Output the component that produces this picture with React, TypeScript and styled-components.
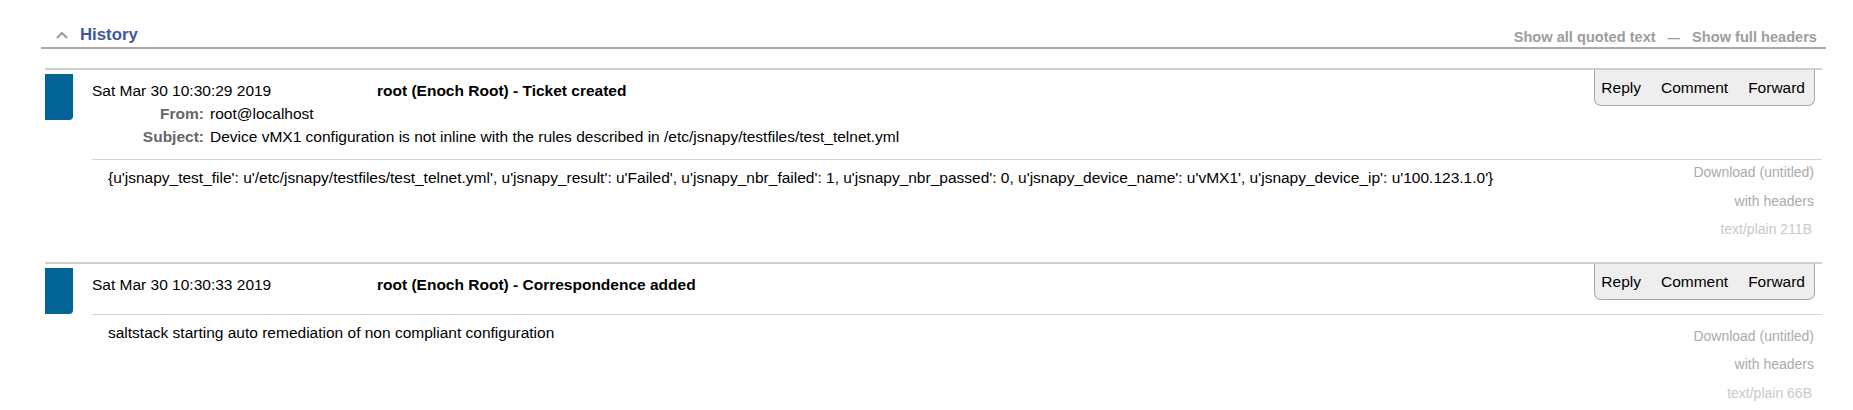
import React from "react";
import styled, { createGlobalStyle } from "styled-components";

const GlobalStyle = createGlobalStyle`
  html, body { margin: 0; padding: 0; background: #fff; }
  body {
    font-family: "Liberation Sans", Arial, Helvetica, sans-serif;
    color: #000;
  }
`;

const Page = styled.div`
  padding: 0 27px 0 41px;
`;

const TitleBar = styled.div`
  display: flex;
  justify-content: space-between;
  align-items: flex-end;
  height: 47px;
  border-bottom: 2px solid #a9a9a9;
`;

const TitleLeft = styled.div`
  align-self: flex-start;
  display: flex;
  align-items: center;
  padding: 25px 0 0 15px;
`;

const Chevron = styled.svg`
  display: block;
  width: 12px;
  height: 8px;
  margin-right: 12px;
`;

const TitleText = styled.span`
  font-size: 16.8px;
  line-height: 20px;
  font-weight: bold;
  color: #42579a;
`;

const TitleLinks = styled.div`
  display: flex;
  align-items: baseline;
  padding-right: 9px;
  font-size: 14.6px;
  line-height: 18px;
  font-weight: bold;
  color: #9d9d9d;
`;

const Dash = styled.span`
  font-size: 12.5px;
  margin: 0 12px;
`;

const MessageList = styled.div`
  margin-top: 19px;
`;

const Message = styled.div<{ $gap: number }>`
  display: flex;
  margin: 0 4px ${(p) => p.$gap}px;
  border-top: 2px solid #cfcfcf;
`;

const Stripe = styled.div`
  flex: none;
  width: 28px;
  height: 46px;
  margin-top: 4px;
  background: #026497;
  border-bottom-right-radius: 4px;
`;

const Content = styled.div`
  flex: 1;
  min-width: 0;
  margin-left: 19px;
`;

const Header = styled.div`
  display: flex;
  justify-content: space-between;
  align-items: flex-start;
  min-height: 50px;
  padding-right: 7px;
  border-bottom: 1px solid #d4d4d4;
`;

const Meta = styled.div`
  padding: 9.4px 0 10.6px;
  font-size: 15.5px;
  line-height: 23px;
`;

const MetaRow = styled.div`
  display: flex;
`;

const DateCell = styled.div`
  flex: none;
  width: 285px;
`;

const Summary = styled.div`
  font-weight: bold;
`;

const Label = styled.div`
  flex: none;
  width: 112px;
  text-align: right;
  font-weight: bold;
  color: #666;
`;

const Value = styled.div`
  margin-left: 6px;
`;

const Actions = styled.div`
  display: flex;
  gap: 20px;
  padding: 6px 9px 6px 6px;
  background: #eeeeee;
  border: 1px solid #a6a6a6;
  border-top: none;
  border-radius: 0 0 7px 7px;
  font-size: 15.5px;
  line-height: 23px;
`;

const ActionLink = styled.span`
  color: #000;
`;

const Body = styled.div`
  display: flex;
  justify-content: space-between;
  align-items: flex-start;
  padding-right: 8px;
`;

const BodyText = styled.div`
  padding: 6px 0 0 16px;
  font-size: 15.5px;
  line-height: 23px;
`;

const Attachments = styled.div<{ $top: number }>`
  display: flex;
  flex-direction: column;
  align-items: flex-end;
  padding-top: ${(p) => p.$top}px;
  font-size: 14px;
  line-height: 18px;
`;

const AttachLine = styled.div<{ $faint?: boolean }>`
  margin-bottom: 10.5px;
  padding-right: ${(p) => (p.$faint ? 2 : 0)}px;
  color: ${(p) => (p.$faint ? "#c9c9c9" : "#ababab")};
`;

type Msg = {
  date: string;
  summary: string;
  from?: string;
  subject?: string;
  body: string;
  size: string;
  attachTop: number;
  gap: number;
};

const messages: Msg[] = [
  {
    date: "Sat Mar 30 10:30:29 2019",
    summary: "root (Enoch Root) - Ticket created",
    from: "root@localhost",
    subject:
      "Device vMX1 configuration is not inline with the rules described in /etc/jsnapy/testfiles/test_telnet.yml",
    body:
      "{u'jsnapy_test_file': u'/etc/jsnapy/testfiles/test_telnet.yml', u'jsnapy_result': u'Failed', u'jsnapy_nbr_failed': 1, u'jsnapy_nbr_passed': 0, u'jsnapy_device_name': u'vMX1', u'jsnapy_device_ip': u'100.123.1.0'}",
    size: "text/plain 211B",
    attachTop: 3.5,
    gap: 13,
  },
  {
    date: "Sat Mar 30 10:30:33 2019",
    summary: "root (Enoch Root) - Correspondence added",
    body: "saltstack starting auto remediation of non compliant configuration",
    size: "text/plain 66B",
    attachTop: 12,
    gap: 0,
  },
];

export default function App() {
  return (
    <>
      <GlobalStyle />
      <Page>
        <TitleBar>
          <TitleLeft>
            <Chevron viewBox="0 0 12 8">
              <path
                d="M1 7 L6 2 L11 7"
                fill="none"
                stroke="#9a9a9a"
                strokeWidth="2"
              />
            </Chevron>
            <TitleText>History</TitleText>
          </TitleLeft>
          <TitleLinks>
            <span>Show all quoted text</span>
            <Dash>—</Dash>
            <span>Show full headers</span>
          </TitleLinks>
        </TitleBar>
        <MessageList>
          {messages.map((m) => (
            <Message key={m.date} $gap={m.gap}>
              <Stripe />
              <Content>
                <Header>
                  <Meta>
                    <MetaRow>
                      <DateCell>{m.date}</DateCell>
                      <Summary>{m.summary}</Summary>
                    </MetaRow>
                    {m.from && (
                      <MetaRow>
                        <Label>From:</Label>
                        <Value>{m.from}</Value>
                      </MetaRow>
                    )}
                    {m.subject && (
                      <MetaRow>
                        <Label>Subject:</Label>
                        <Value>{m.subject}</Value>
                      </MetaRow>
                    )}
                  </Meta>
                  <Actions>
                    <ActionLink>Reply</ActionLink>
                    <ActionLink>Comment</ActionLink>
                    <ActionLink>Forward</ActionLink>
                  </Actions>
                </Header>
                <Body>
                  <BodyText>{m.body}</BodyText>
                  <Attachments $top={m.attachTop}>
                    <AttachLine>Download (untitled)</AttachLine>
                    <AttachLine>with headers</AttachLine>
                    <AttachLine $faint>{m.size}</AttachLine>
                  </Attachments>
                </Body>
              </Content>
            </Message>
          ))}
        </MessageList>
      </Page>
    </>
  );
}
